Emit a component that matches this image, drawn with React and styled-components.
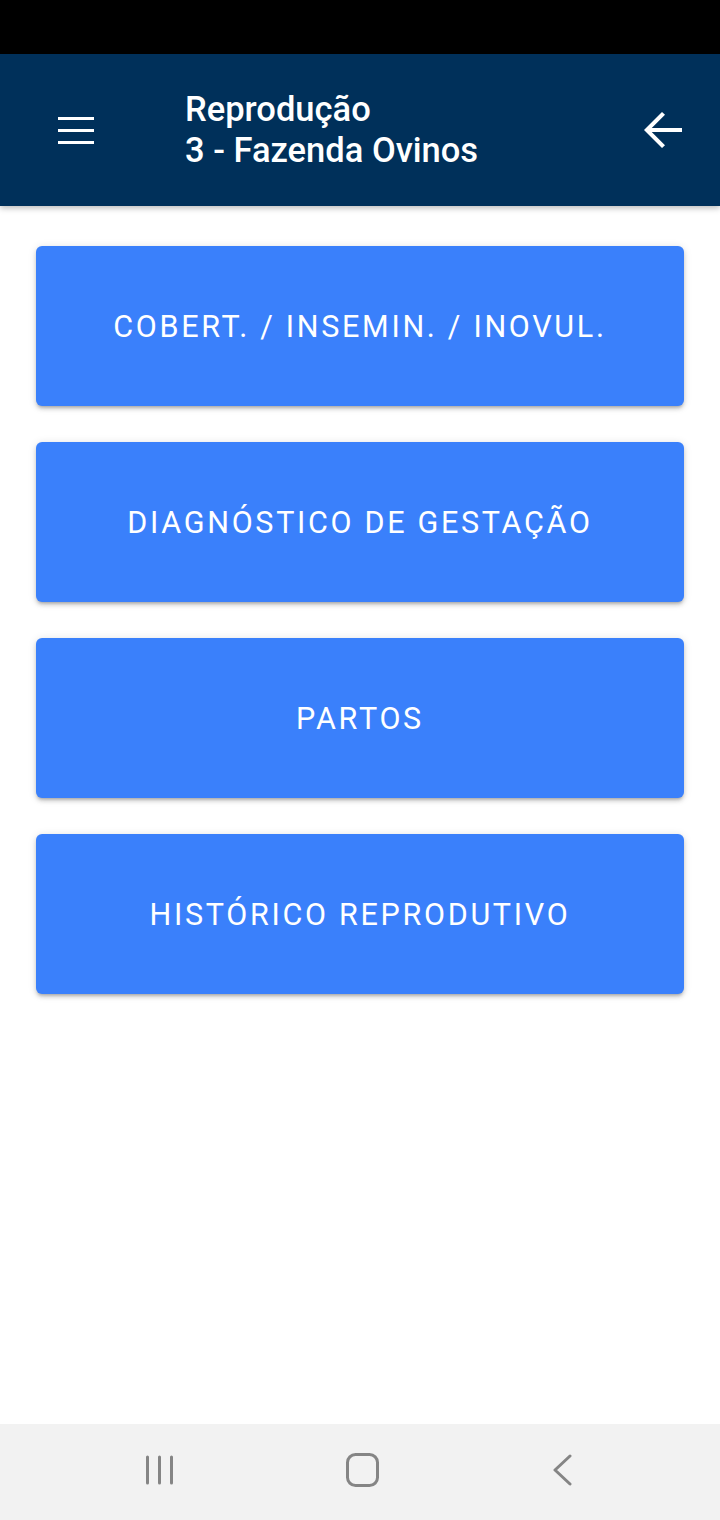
import React from "react";
import styled, { createGlobalStyle } from "styled-components";

const Global = createGlobalStyle`
  html, body { margin: 0; padding: 0; background: #ffffff; }
  body { font-family: Roboto, "Noto Sans", "Liberation Sans", sans-serif; }
  * { box-sizing: border-box; }
`;

const Screen = styled.div`
  width: 720px;
  height: 1520px;
  display: flex;
  flex-direction: column;
  background: #ffffff;
  overflow: hidden;
`;

const StatusBar = styled.div`
  height: 54px;
  background: #000000;
  flex: none;
`;

const Header = styled.header`
  height: 152px;
  flex: none;
  background: #00305a;
  display: flex;
  align-items: center;
  padding: 0 28px 0 46px;
  box-shadow: 0 2px 6px rgba(0, 0, 0, 0.28);
  position: relative;
  z-index: 1;
`;

const IconButton = styled.button`
  width: 60px;
  height: 60px;
  padding: 0;
  border: 0;
  background: transparent;
  display: flex;
  align-items: center;
  justify-content: center;
  color: #ffffff;
  flex: none;
`;

const Titles = styled.div`
  flex: 1;
  margin-left: 79px;
  display: flex;
  flex-direction: column;
  color: #ffffff;
  font-family: Roboto, sans-serif;
  font-weight: 500;
  font-size: 34.5px;
  line-height: 41px;
`;

const Content = styled.main`
  flex: 1;
  display: flex;
  flex-direction: column;
  gap: 36px;
  padding: 40px 36px 0 36px;
`;

const MenuButton = styled.button`
  height: 160px;
  width: 100%;
  border: 0;
  border-radius: 6px;
  background: #3a80fb;
  color: #ffffff;
  font-family: Roboto, sans-serif;
  font-weight: 400;
  font-size: 30.5px;
  letter-spacing: 2.7px;
  text-transform: uppercase;
  display: flex;
  align-items: center;
  justify-content: center;
  padding: 0;
  box-shadow: 0 3px 3px -2px rgba(0,0,0,0.2), 0 3px 4px 0 rgba(0,0,0,0.14), 0 1px 8px 0 rgba(0,0,0,0.12);
`;

const NavBar = styled.nav`
  height: 96px;
  flex: none;
  background: #f2f2f2;
  display: flex;
  align-items: center;
  gap: 173px;
  padding: 0 0 5px 146px;
`;

const NavIcon = styled.svg`
  display: block;
  flex: none;
`;

const MenuIcon = () => (
  <svg width="36" height="27" viewBox="0 0 36 27">
    <rect x="0" y="0" width="36" height="3" fill="#fff" />
    <rect x="0" y="12" width="36" height="3" fill="#fff" />
    <rect x="0" y="24" width="36" height="3" fill="#fff" />
  </svg>
);

const ArrowIcon = () => (
  <svg width="60" height="60" viewBox="0 0 24 24">
    <path fill="#fff" d="M20 11.2H7.9l5.3-5.3L12 4.8 4.8 12l7.2 7.2 1.2-1.1-5.3-5.3H20z" />
  </svg>
);

const items = [
  "Cobert. / Insemin. / Inovul.",
  "Diagnóstico de Gestação",
  "Partos",
  "Histórico Reprodutivo",
];

export default function App() {
  return (
    <>
      <Global />
      <Screen>
        <StatusBar />
        <Header>
          <IconButton aria-label="menu">
            <MenuIcon />
          </IconButton>
          <Titles>
            <span>Reprodução</span>
            <span>3 - Fazenda Ovinos</span>
          </Titles>
          <IconButton aria-label="voltar">
            <ArrowIcon />
          </IconButton>
        </Header>
        <Content>
          {items.map((t) => (
            <MenuButton key={t}>{t}</MenuButton>
          ))}
        </Content>
        <NavBar>
          <NavIcon width="27" height="30" viewBox="0 0 27 30">
            <g stroke="#858585" strokeWidth="3" strokeLinecap="round">
              <line x1="1.5" y1="2" x2="1.5" y2="28" />
              <line x1="13.5" y1="2" x2="13.5" y2="28" />
              <line x1="25.5" y1="2" x2="25.5" y2="28" />
            </g>
          </NavIcon>
          <NavIcon width="33" height="34" viewBox="0 0 33 34">
            <rect x="1.5" y="1.5" width="30" height="31" rx="8" fill="none" stroke="#858585" strokeWidth="3" />
          </NavIcon>
          <NavIcon width="22" height="32" viewBox="0 0 22 32">
            <polyline points="18,2 3,16 18,30" fill="none" stroke="#858585" strokeWidth="3" strokeLinecap="round" strokeLinejoin="round" />
          </NavIcon>
        </NavBar>
      </Screen>
    </>
  );
}
